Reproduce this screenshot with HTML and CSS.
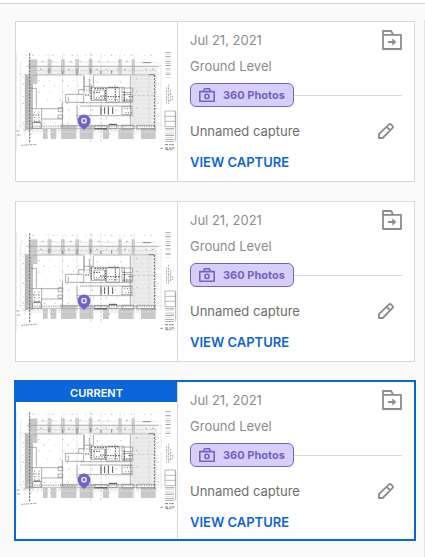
FILE: index.html
```html
<!DOCTYPE html>
<html lang="en">
<head>
    <meta charset="UTF-8">
    <meta name="viewport" content="width=device-width, initial-scale=1.0">
    <title>Captures</title>
    <link rel="stylesheet" href="styles.css">
</head>
<body>
    <!-- shared drawings -->
    <svg class="sprites" aria-hidden="true">
        <symbol id="plan" viewBox="48 156 483 297">
            <!-- column shading -->
            <g fill="#c9c9c9">
                <path d="M86 178h26v74H86z"/>
                <path d="M129 387h14v30h-14zM152 387h17v30h-17zM183 375h46v42h-46zM239 375h41v42h-41zM309 387h18v30h-18zM355 384h45v33h-45zM423 384h44v33h-44z"/>
            </g>
            <path fill="#f1f1f1" d="M112 196h360v28H112z"/>
            <path fill="#c6c6c6" d="M143 178h11v46h-11zM183 178h11v46h-11zM226 178h11v46h-11zM266 178h11v46h-11zM355 178h10v46h-10zM395 178h10v46h-10z"/>
            <path fill="#ebebeb" d="M394 228h66v148h-66z"/>
            <path fill="#c0c0c0" d="M76 222h21v168H76z"/>
            <path stroke="#d8d8d8" stroke-width="2" stroke-dasharray="2 3" d="M394 238h66M394 250h66M394 262h66M394 274h66M394 300h66M394 312h66M394 326h66M394 340h66M394 354h66M394 366h66"/>
            <!-- grid -->
            <path fill="none" stroke="#dedede" stroke-width="2" d="M49 156v296M147 160v65M188 160v230M231 160v230M303 160v65M360 160v70M402 160v264M447 225v175M70 180q-8 4-8 16v180q0 14 14 18M55 222h425M55 377h435M70 396h405M110 187h360M475 190q8 0 8 16v60M483 280v110"/>
            <path stroke="#c0c0c0" stroke-width="2" stroke-dasharray="9 4" d="M272 158v268M303 300v125M98 212h370M400 286h64M70 390h400"/>
            <path stroke="#b8b8b8" stroke-width="3" stroke-dasharray="2 17 4 13 1 22" d="M78 166h400M72 402h400M70 230v160M474 230v170"/>
            <!-- outer walls -->
            <path fill="none" stroke="#999" stroke-width="2" d="M80 199h398M98 225h150M280 225h185M76 222v170M97 252v136M92 385h373M180 376h220"/>
            <path stroke="#6c6c6c" stroke-width="3" stroke-dasharray="7 3" d="M89 160v268M463 224v164"/>
            <path stroke="#999" stroke-width="3" stroke-dasharray="3 4" d="M81 230v160M467 226v168M96 379h370"/>
            <path stroke="#aaa" stroke-width="3" stroke-dasharray="5 24 3 31 4 17" d="M120 208h350M126 184h260"/>
            <path stroke="#858585" stroke-width="3" d="M428 188h24M446 224h16M147 206v13M231 208v16M335 211v10M272 207v12M188 212v10M303 212v10"/>
            <!-- rooms -->
            <g fill="none" stroke="#858585" stroke-width="2">
                <path d="M92 265h17v58M92 326h95M125 326v60M124 357h62M187 303v82M98 368h25v17H98zM175 323h13v12h-13zM174 345h14v10h-14z"/>
                <path d="M197 283h54v24h-54zM205 290v15M236 283v-14h16v-44M252 228v52M280 227v32h-26M268 236v44"/>
                <path d="M231 318v40h38M240 318h158M231 347h168M240 308h158M391 227v150M373 262v46M273 262h98M273 262v39h46"/>
                <path d="M282 270h32v28h-32zM320 264h38v42h-38zM366 264h32v14h-32zM366 284h32v20h-32zM366 320h30v24h-30z"/>
                <path d="M283 377h38v11h-38zM326 374h25v12h-25zM366 376h36v11h-36zM410 376h54v11h-54z"/>
            </g>
            <g stroke="#555" stroke-width="3" fill="none">
                <path stroke-dasharray="5 3" d="M283 265h36M280 277h20M300 288h18M317 270v34M322 290h38M346 266v36M255 285h16M274 262v36M373 274v30M386 290h12M326 262h31M370 300h26"/>
                <path d="M303 320v24M314 322v20M325 320v24M338 322v20M101 366h20M283 386h38M327 373h24"/>
                <path stroke="#7c7c7c" stroke-dasharray="3 5" d="M251 270h22M373 326h24M376 338h22M99 345h20M103 335v32M288 293h30M326 299h28M117 335v28"/>
            </g>
            <path fill="none" stroke="#b8b8b8" stroke-width="3" stroke-dasharray="4 29 2 36" d="M115 242h130M130 258h240M108 300h80M115 276h110M204 330h150M104 354h280M132 370h110M408 236h50M408 275h50M410 323h50M290 246h90M200 311h30"/>
            <!-- title block -->
            <path stroke="#999" stroke-width="15" stroke-dasharray="2 5 1 4 3 7 1 3" d="M504 157v78"/>
            <path stroke="#aaa" stroke-width="3" stroke-dasharray="5 3 8 2" d="M500 262v48M506 254v58M512 270v36M518 288v12"/>
            <path fill="none" stroke="#999" stroke-width="2" d="M495 333h31v47h-31zM495 349h31M495 364h31M527 334v90"/>
            <path stroke="#999" stroke-width="27" stroke-dasharray="2 3 2 5 1 4" d="M509 384v42"/>
            <path stroke="#777" stroke-width="3" stroke-dasharray="9 3 5 2" d="M495 434h26M495 444h28M482 445h6M497 449h20"/>
            <path stroke="#999" stroke-width="3" stroke-dasharray="6 2 3 2" d="M64 436l45-3M50 393h10M51 405h11"/>
        </symbol>
        <symbol id="pin" viewBox="0 0 14 16">
            <path fill="#7460cd" d="M7 .5a6.400 6.400 0 0 1 6.500 6.300C13.500 11 9.500 13.200 7 16 4.500 13.200.5 11 .5 6.800A6.400 6.400 0 0 1 7 .5z"/>
            <circle cx="7" cy="6.700" r="2.100" fill="none" stroke="#e9e5fa" stroke-width="1.500"/>
        </symbol>
        <symbol id="folder" viewBox="0 0 20 20">
            <path fill="none" stroke="#8c8c8c" stroke-width="1.800" stroke-linejoin="round" d="M1 4.800h18v14.200H1zM1 4.800V1h8.200l2 3.800"/>
            <path fill="none" stroke="#8c8c8c" stroke-width="2" d="M6 12h6"/>
            <path fill="#8c8c8c" d="M10.300 8.300 14.300 12l-4 3.700z"/>
        </symbol>
        <symbol id="camera" viewBox="0 0 16 14">
            <g fill="none" stroke="#7460cd" stroke-width="1.600" stroke-linejoin="round">
                <path d="M.8 3.600h14.400v9.600H.8zM4.800 3.600l.7-2.800h5l.7 2.800"/>
                <circle cx="8" cy="8.400" r="2.100"/>
            </g>
        </symbol>
        <symbol id="pencil" viewBox="0 0 16 16">
            <path fill="none" stroke="#8c8c8c" stroke-width="1.800" stroke-linejoin="round" d="M1 15v-3.800L10.800 1.600q1.200-1.200 2.400 0l1.200 1.200q1.200 1.200 0 2.400L4.700 15zM8.600 3.800l3.700 3.700"/>
        </symbol>
    </svg>

    <main class="captures">
        <article class="card">
            <div class="thumb">
                <svg class="plan" role="img" aria-label="Floor plan"><use href="#plan"/></svg>
                <svg class="pin" aria-hidden="true"><use href="#pin"/></svg>
            </div>
            <div class="info">
                <div class="date-row">
                    <time datetime="2021-07-21">Jul 21, 2021</time>
                    <button class="icon-button" type="button" aria-label="Move"><svg class="folder"><use href="#folder"/></svg></button>
                </div>
                <p class="level">Ground Level</p>
                <div class="type-row">
                    <span class="badge"><svg class="camera"><use href="#camera"/></svg>360 Photos</span>
                </div>
                <div class="name-row">
                    <span>Unnamed capture</span>
                    <button class="icon-button edit" type="button" aria-label="Rename"><svg class="pencil"><use href="#pencil"/></svg></button>
                </div>
                <a class="view" href="#">VIEW CAPTURE</a>
            </div>
        </article>

        <article class="card">
            <div class="thumb">
                <svg class="plan" role="img" aria-label="Floor plan"><use href="#plan"/></svg>
                <svg class="pin" aria-hidden="true"><use href="#pin"/></svg>
            </div>
            <div class="info">
                <div class="date-row">
                    <time datetime="2021-07-21">Jul 21, 2021</time>
                    <button class="icon-button" type="button" aria-label="Move"><svg class="folder"><use href="#folder"/></svg></button>
                </div>
                <p class="level">Ground Level</p>
                <div class="type-row">
                    <span class="badge"><svg class="camera"><use href="#camera"/></svg>360 Photos</span>
                </div>
                <div class="name-row">
                    <span>Unnamed capture</span>
                    <button class="icon-button edit" type="button" aria-label="Rename"><svg class="pencil"><use href="#pencil"/></svg></button>
                </div>
                <a class="view" href="#">VIEW CAPTURE</a>
            </div>
        </article>

        <article class="card current">
            <div class="thumb">
                <span class="banner">CURRENT</span>
                <svg class="plan" role="img" aria-label="Floor plan"><use href="#plan"/></svg>
                <svg class="pin" aria-hidden="true"><use href="#pin"/></svg>
            </div>
            <div class="info">
                <div class="date-row">
                    <time datetime="2021-07-21">Jul 21, 2021</time>
                    <button class="icon-button" type="button" aria-label="Move"><svg class="folder"><use href="#folder"/></svg></button>
                </div>
                <p class="level">Ground Level</p>
                <div class="type-row">
                    <span class="badge"><svg class="camera"><use href="#camera"/></svg>360 Photos</span>
                </div>
                <div class="name-row">
                    <span>Unnamed capture</span>
                    <button class="icon-button edit" type="button" aria-label="Rename"><svg class="pencil"><use href="#pencil"/></svg></button>
                </div>
                <a class="view" href="#">VIEW CAPTURE</a>
            </div>
        </article>
    </main>
</body>
</html>
```

FILE: styles.css
```css
*{
    box-sizing: border-box;
}
body{
    margin: 0;
    padding-top: 3px;
    background: white;
    color: #8c8c8c;
    font-family: Inter, "Liberation Sans", sans-serif;
    font-size: 13px;
    line-height: 20px;
}
.sprites{
    position: absolute;
    width: 0;
    height: 0;
}
.captures{
    display: flex;
    flex-direction: column;
    gap: 19px;
    min-height: calc(100vh - 3px);
    padding: 17px 10px 15px 15px;
    border-top: 1px solid #d8d8d8;
    background: linear-gradient(#e4e4e4, #e4e4e4) right 16px / 1px 100% no-repeat #fafafa;
}
.card{
    display: flex;
    min-height: 161px;
    border: 1px solid #d8d8d8;
    background-color: white;
}
.current{
    margin: -1px;
    border: 2px solid #0b66da;
}
.thumb{
    position: relative;
    display: flex;
    align-items: center;
    flex: none;
    width: 162px;
    border-right: 1px solid #d8d8d8;
}
.plan{
    width: 161px;
    height: 99px;
}
.pin{
    position: absolute;
    top: 58%;
    left: 61px;
    width: 14px;
    height: 16px;
}
.banner{
    position: absolute;
    top: 0;
    left: 0;
    right: 0;
    height: 20px;
    background-color: #0b66da;
    color: white;
    font-size: 11px;
    font-weight: 600;
    line-height: 22px;
    text-align: center;
}
.info{
    flex: 1;
    padding: 5px 12px 4px;
}
.date-row,
.name-row{
    display: flex;
    align-items: center;
    justify-content: space-between;
}
.date-row,
.level{
    margin: 0;
    line-height: 26px;
}
.icon-button{
    display: flex;
    padding: 0;
    border: 0;
    background: none;
    cursor: pointer;
}
.folder{
    width: 20px;
    height: 20px;
}
.pencil{
    width: 16px;
    height: 16px;
}
.edit{
    margin-right: 8px;
}
.type-row{
    display: flex;
    align-items: center;
    margin-top: 4px;
}
.type-row::after{
    content: "";
    flex: 1;
    height: 1px;
    background-color: #d8d8d8;
}
.badge{
    display: flex;
    align-items: center;
    gap: 8px;
    height: 24px;
    padding: 0 8px;
    border: 1px solid #7460cd;
    border-radius: 6px;
    background-color: #d8cff8;
    color: #7460cd;
    font-size: 11px;
    font-weight: 700;
}
.camera{
    width: 16px;
    height: 14px;
}
.name-row{
    margin: 14px 0 11px;
    color: #6e6e6e;
}
.view{
    display: block;
    color: #0b66da;
    font-weight: 600;
    text-decoration: none;
}
```
